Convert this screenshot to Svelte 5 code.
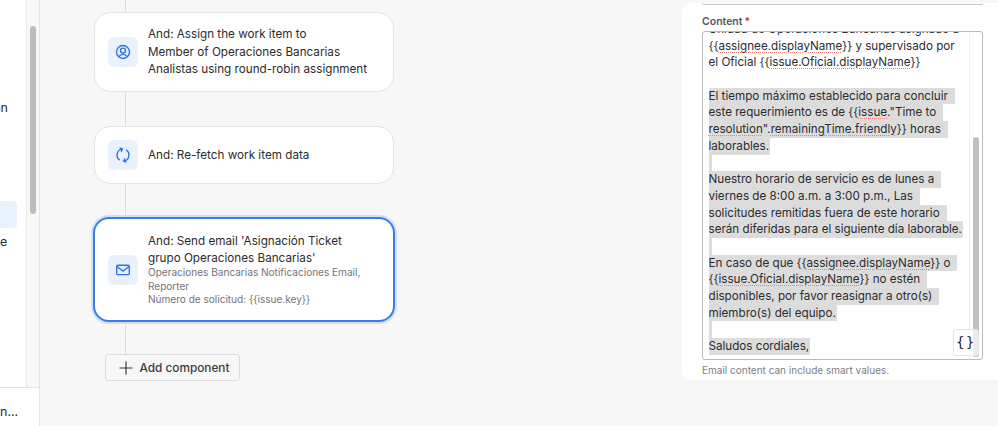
<script>
  const steps = [
    {
      id: "assign",
      lines: ["And: Assign the work item to", "Member of Operaciones Bancarias", "Analistas using round-robin assignment"],
    },
    { id: "refetch", lines: ["And: Re-fetch work item data"] },
  ];
  const paragraphs = [
    ["El tiempo máximo establecido para concluir", "este requerimiento es de {{issue.\"Time to", "resolution\".remainingTime.friendly}} horas", "laborables."],
    ["Nuestro horario de servicio es de lunes a", "viernes de 8:00 a.m. a 3:00 p.m., Las", "solicitudes remitidas fuera de este horario", "serán diferidas para el siguiente día laborable."],
    ["En caso de que {{assignee.displayName}} o", "{{issue.Oficial.displayName}} no estén", "disponibles, por favor reasignar a otro(s)", "miembro(s) del equipo."],
    ["Saludos cordiales,"],
  ];

  // odd indexes of the result are the words the spell checker flags
  function parts(line) {
    return line.split(/(assignee\.displayName|issue\.Oficial\.displayName|issue(?=\.")|resolution|remainingTime\.friendly)/);
  }
</script>

<div class="page">
  <aside class="sidebar">
    <div class="list">
      <div class="items">
        <span class="item-on">on</span>
        <span class="item-active"></span>
        <span class="item-e">e</span>
      </div>
      <div class="track"><div class="thumb"></div></div>
    </div>
    <div class="side-foot">n...</div>
  </aside>

  <main class="canvas">
    <div class="flow">
      <div class="line top"></div>
      {#each steps as step, i}
        <div class="card" class:single={step.lines.length === 1}>
          <div class="icon">
            {#if step.id === "assign"}
              <svg width="16" height="16" viewBox="0 0 16 16" fill="none" stroke="currentColor" stroke-width="1.4">
                <circle cx="8" cy="8" r="6.5" />
                <circle cx="8" cy="6.6" r="2.5" />
                <path d="M3.9 12.6c.9-1.5 2.3-2.2 4.1-2.2s3.2.7 4.1 2.2" />
              </svg>
            {:else}
              <svg width="16" height="16" viewBox="0 0 16 16" fill="none" stroke="currentColor" stroke-width="1.4">
                <path d="M4.8 13.2A6.2 6.2 0 0 1 7.4 1.9" />
                <path d="M4.6 .9 7.4 1.9 6 4.6" />
                <path d="M11.2 2.8A6.2 6.2 0 0 1 8.6 14.1" />
                <path d="M11.4 15.1 8.6 14.1 10 11.4" />
              </svg>
            {/if}
          </div>
          <div class="text">
            {#each step.lines as l}<div class="title">{l}</div>{/each}
          </div>
        </div>
        <div class="line" class:before-selected={i === steps.length - 1}></div>
      {/each}
      <div class="card selected">
        <div class="icon">
          <svg width="16" height="12" viewBox="0 0 16 12" fill="none" stroke="currentColor" stroke-width="1.4">
            <rect x="1.7" y="1.2" width="12.6" height="9.4" rx="1.2" />
            <path d="M2 2.5 8 7l6-4.5" />
          </svg>
        </div>
        <div class="text">
          <div>And: Send email 'Asignación Ticket</div>
          <div>grupo Operaciones Bancarias'</div>
          <div class="sub">Operaciones Bancarias Notificaciones Email,</div>
          <div class="sub">Reporter</div>
          <div class="sub">Número de solicitud: &#123;&#123;issue.key&#125;&#125;</div>
        </div>
      </div>
      <div class="line short"></div>
      <button class="add">
        <svg width="14" height="14" viewBox="0 0 14 14" stroke="currentColor" stroke-width="1.2"><path d="M7 .5v13M.5 7h13" /></svg>
        <span>Add component</span>
      </button>
    </div>
  </main>

  <section class="panel">
    <div class="panel-card">
      <div class="prev-field"></div>
      <div class="label">Content<span class="req">*</span></div>
      <div class="editor">
        <div class="body">
          <div class="ln cut">Unidad de Operaciones Bancarias asignado a</div>
          <div class="ln">&#123;&#123;<span class="sq">assignee.displayName</span>&#125;&#125; y supervisado por</div>
          <div class="ln">el Oficial &#123;&#123;<span class="sq">issue.Oficial.displayName</span>&#125;&#125;</div>
          <div class="ln">&nbsp;</div>
          {#each paragraphs as p, i}
            {#each p as l, j}
              <div class="ln">
                <mark class:end={j === p.length - 1}>
                  {#each parts(l) as part, k}{#if k % 2}<span class="sq">{part}</span>{:else}{part}{/if}{/each}
                </mark>
              </div>
            {/each}
            {#if i < paragraphs.length - 1}<div class="ln"><mark class="gap"></mark></div>{/if}
          {/each}
        </div>
        <div class="ed-track"><div class="ed-thumb"></div></div>
        <div class="braces">&#123;&#125;</div>
      </div>
      <div class="hint">Email content can include smart values.</div>
    </div>
  </section>
</div>

<style>
  :global(body) {
    margin: 0;
    background: #f7f7f7;
    font-family: Inter, "Liberation Sans", sans-serif;
  }

  .page {
    display: flex;
    height: 426px;
    width: 998px;
    overflow: hidden;
    color: #2c2c30;
  }

  .sidebar {
    width: 39px;
    flex-shrink: 0;
    display: flex;
    flex-direction: column;
    background: #fff;
    border-right: 1px solid #e4e4e6;
  }

  .list {
    flex: 1;
    display: flex;
    min-height: 0;
  }

  .items {
    width: 27px;
    position: relative;
    overflow: hidden;
    border-right: 1px solid #ececee;
  }

  .item-on,
  .item-e {
    position: absolute;
    font-size: 12.5px;
    left: 0;
  }
  .item-on {
    left: -7px;
    top: 100px;
  }
  .item-e {
    top: 234px;
  }
  .item-active {
    position: absolute;
    left: 0;
    top: 201px;
    width: 17px;
    height: 27px;
    background: #e9f1fd;
    border-radius: 0 4px 4px 0;
  }

  .track {
    width: 12px;
    background: #f8f8f8;
    padding-top: 26px;
    box-sizing: border-box;
  }
  .thumb {
    width: 6px;
    height: 188px;
    margin-left: 3px;
    background: #bdbdbd;
    border-radius: 3px;
  }

  .side-foot {
    height: 39px;
    border-top: 1px solid #e4e4e6;
    box-sizing: border-box;
    font-size: 12.5px;
    padding-top: 16px;
  }

  .canvas {
    width: 642px;
    flex-shrink: 0;
  }

  .flow {
    width: 300px;
    margin-left: 54px;
    display: flex;
    flex-direction: column;
    align-items: flex-start;
  }

  .line {
    width: 1px;
    height: 34px;
    margin-left: 31px;
    background: #dcdcde;
  }
  .line.top {
    height: 12px;
  }
  .line.before-selected {
    height: 33px;
  }
  .line.short {
    height: 32px;
  }

  .card {
    width: 300px;
    height: 80px;
    box-sizing: border-box;
    background: #fff;
    border: 1px solid #e4e4e6;
    border-radius: 16px;
    padding: 0 13px;
    display: flex;
    align-items: center;
    gap: 10px;
    font-size: 11.7px;
    line-height: 16.7px;
  }
  .card.single {
    height: 58px;
  }
  .card:not(.single):not(.selected) .title:first-child {
    margin-bottom: 1.5px;
  }
  .card.selected {
    height: 105px;
    width: 302px;
    margin-left: -1px;
    border: 2px solid #3b7de8;
    box-shadow: 0 0 0 2px #d0e0fa;
  }

  .icon {
    width: 30px;
    height: 30px;
    flex-shrink: 0;
    border-radius: 6px;
    background: #e9f1fd;
    color: #2f74e6;
    display: flex;
    align-items: center;
    justify-content: center;
  }

  .text {
    white-space: nowrap;
  }

  .sub {
    font-size: 10.05px;
    line-height: 13.3px;
    color: #74747c;
  }

  .add {
    margin-left: 10.5px;
    height: 27px;
    width: 135px;
    box-sizing: border-box;
    display: flex;
    align-items: center;
    gap: 7px;
    padding: 0 13px;
    white-space: nowrap;
    font: 500 11.8px Inter, "Liberation Sans", sans-serif;
    color: #3a3a40;
    background: #f7f7f7;
    border: 1px solid #dcdcde;
    border-radius: 3px;
  }
  .add svg {
    flex-shrink: 0;
  }

  .panel {
    flex: 1;
    padding-top: 3px;
  }

  .panel-card {
    background: #fff;
    border-radius: 8px 0 0 8px;
    height: 377px;
    padding: 0 20px;
    box-sizing: border-box;
    overflow: hidden;
  }

  .prev-field {
    height: 2px;
    width: 281px;
    box-sizing: border-box;
    border: 1px solid #c4c4cc;
    border-top: 0;
    border-radius: 0 0 3px 3px;
  }

  .label {
    font-size: 10.5px;
    font-weight: 600;
    color: #55555c;
    margin-top: 10px;
    line-height: 13px;
  }
  .req {
    color: #d9333f;
    margin-left: 2px;
  }

  .editor {
    position: relative;
    margin-top: 3px;
    height: 329px;
    width: 281px;
    box-sizing: border-box;
    border: 1px solid #b9b9c2;
    border-radius: 3px;
    overflow: hidden;
    background: #fff;
  }

  .body {
    padding-left: 5.5px;
    font-size: 11.65px;
    line-height: 16.7px;
    margin-top: -11px;
    white-space: nowrap;
  }

  .ln {
    height: 16.7px;
  }

  mark {
    background: #dcdcdc;
    color: inherit;
    padding-right: 7px;
    display: inline-block;
    height: 16.7px;
    vertical-align: top;
  }
  mark.end {
    padding-right: 1px;
  }
  mark.gap {
    width: 3px;
    padding: 0;
  }

  .sq {
    text-decoration: underline dotted #ef7f78 1px;
    text-underline-offset: 2px;
  }

  .ed-track {
    position: absolute;
    top: 0;
    right: 0;
    bottom: 0;
    width: 12px;
    border-left: 1px solid #f0f0f0;
  }
  .ed-thumb {
    position: absolute;
    top: 105px;
    bottom: 2px;
    right: 3px;
    width: 6px;
    border-radius: 3px;
    background: #c0c0c0;
  }

  .braces {
    position: absolute;
    right: 3px;
    bottom: 3px;
    width: 26px;
    height: 27px;
    box-sizing: border-box;
    border: 1px solid #e4e4e6;
    border-radius: 3px;
    background: rgba(255, 255, 255, 0.7);
    font: 13.5px "DejaVu Sans Mono", monospace;
    letter-spacing: 1.5px;
    text-align: center;
    line-height: 25px;
    color: #222;
  }

  .hint {
    font-size: 10px;
    color: #7d7d85;
    margin-top: 4px;
  }
</style>
